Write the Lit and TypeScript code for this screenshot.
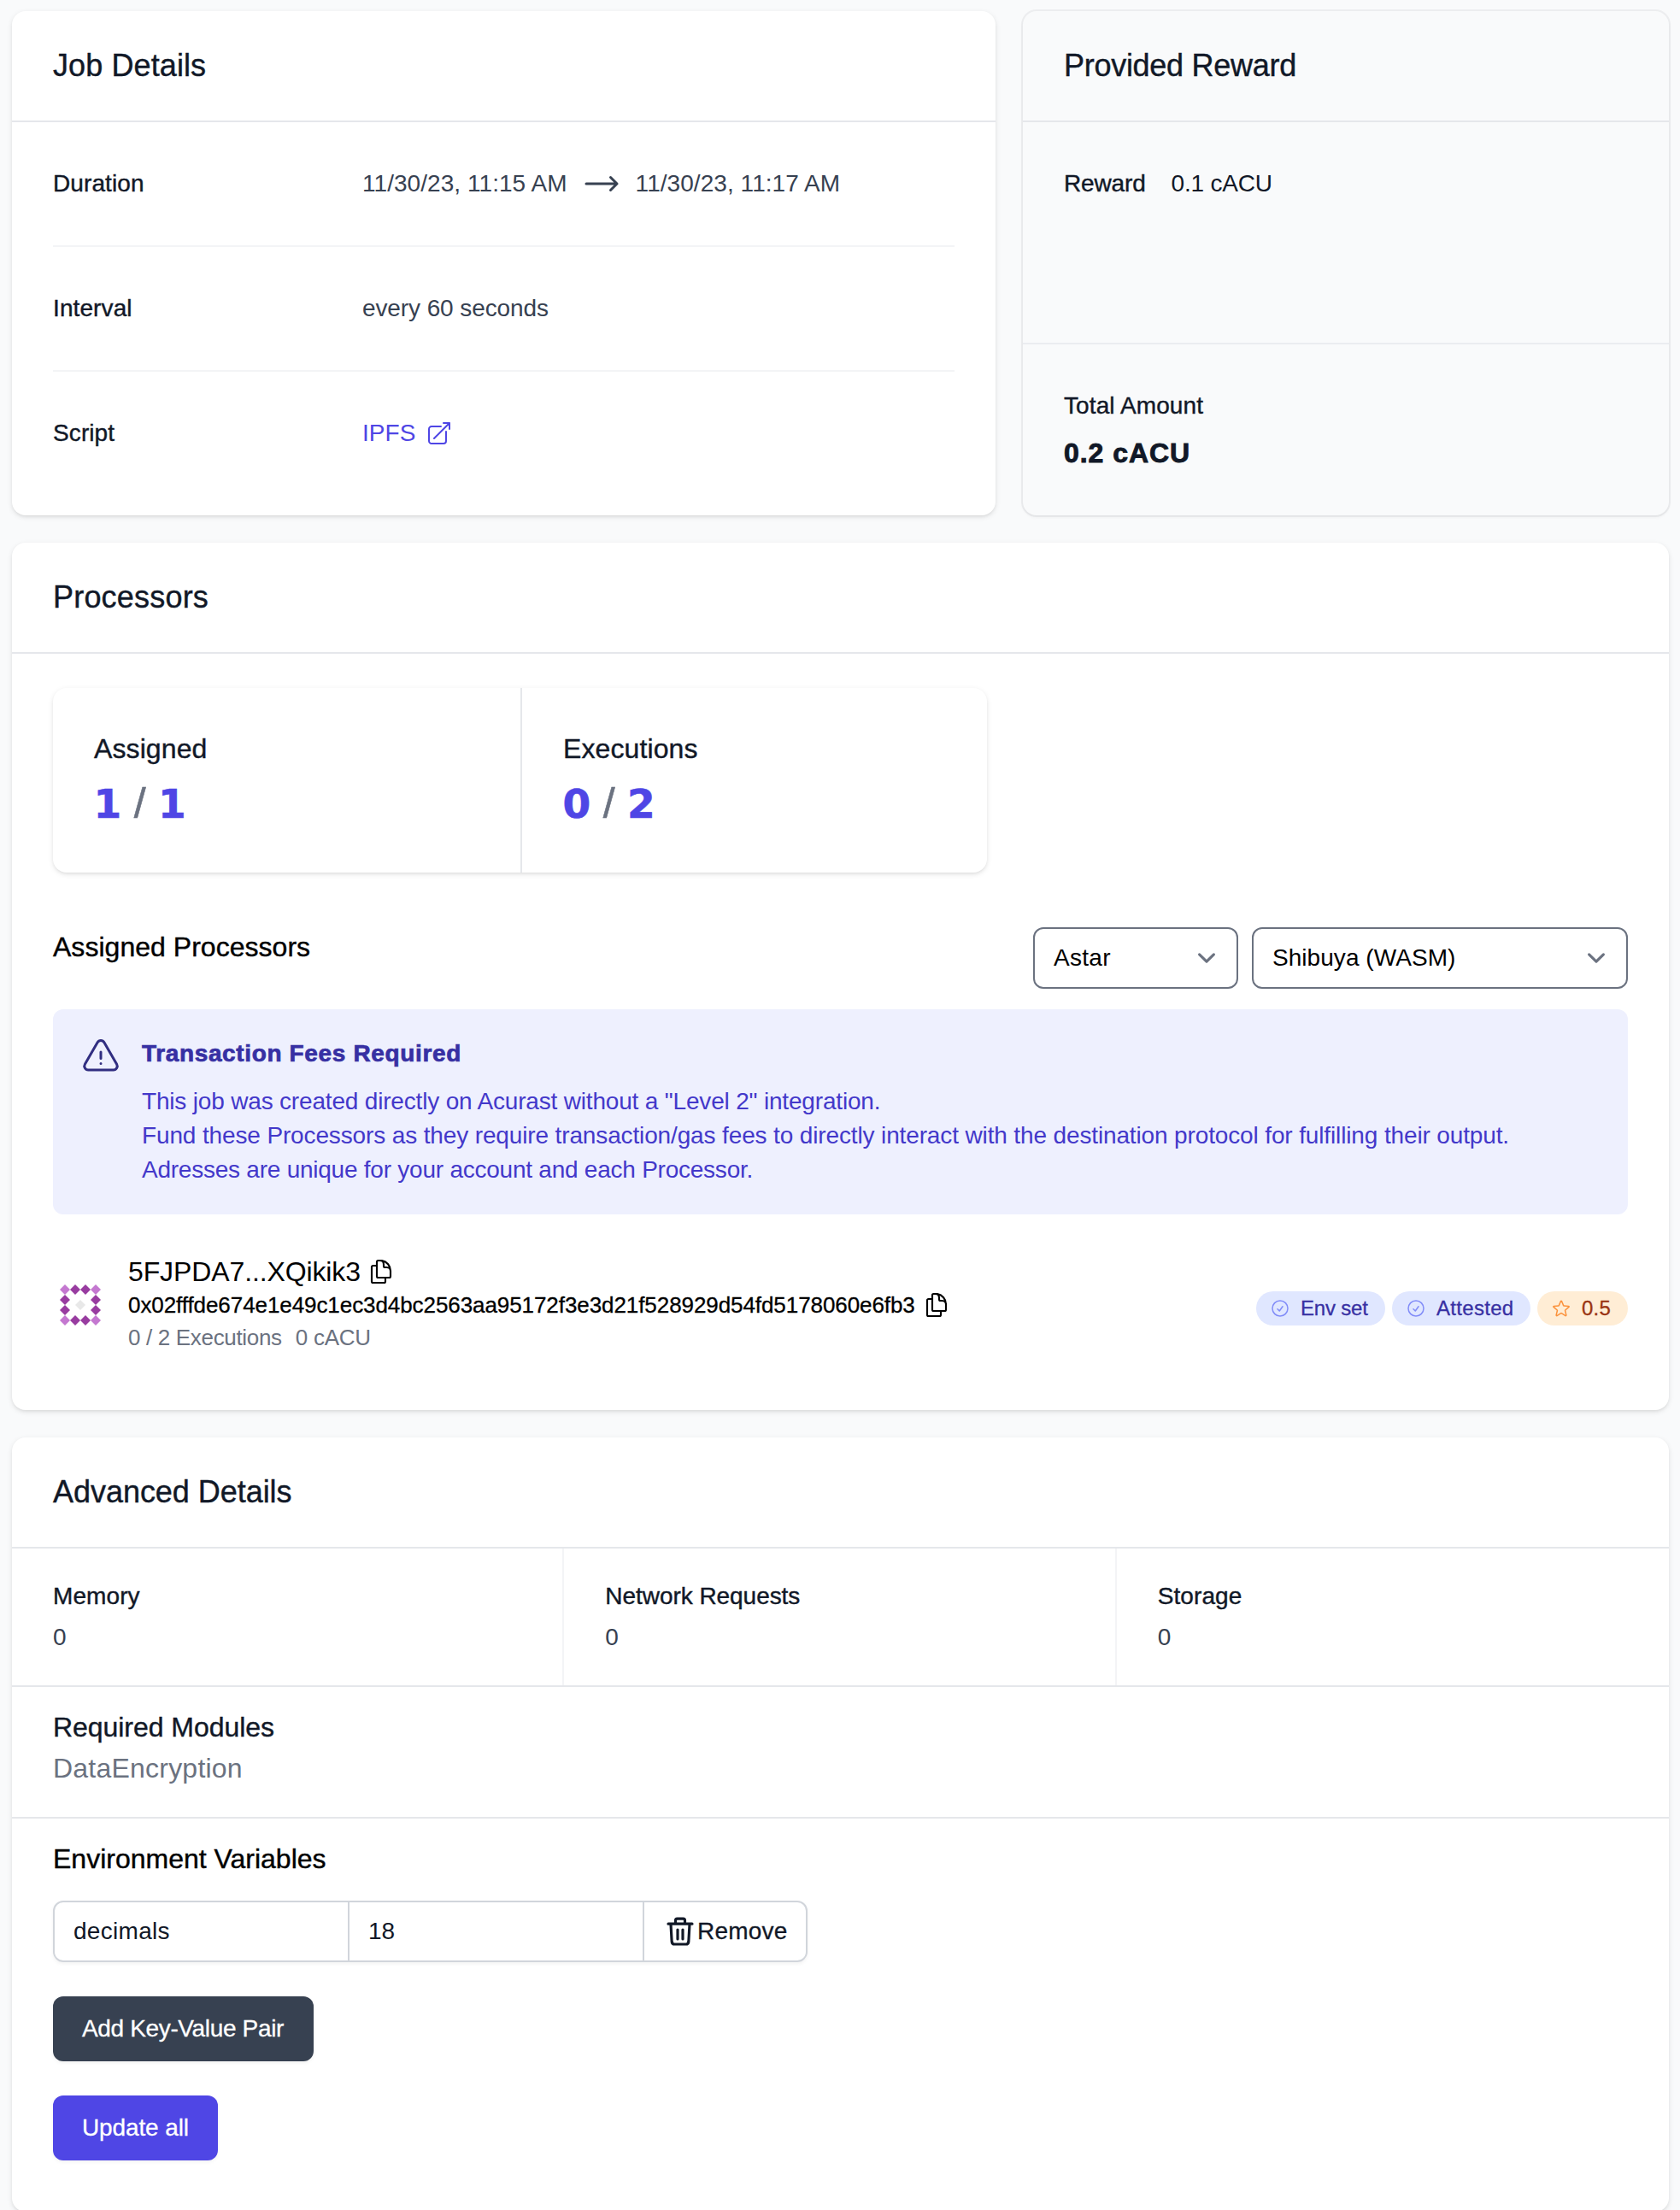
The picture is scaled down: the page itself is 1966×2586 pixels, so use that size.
import { LitElement, html, css, svg } from "lit";

const icons = {
  arrow: svg`<path d="M17.25 8.25L21 12m0 0l-3.75 3.75M21 12H3"/>`,
  external: svg`<path d="M13.5 6H5.25A2.25 2.25 0 003 8.25v10.5A2.25 2.25 0 005.25 21h10.5A2.25 2.25 0 0018 18.75V10.5m-10.5 6L21 3m0 0h-5.25M21 3v5.25"/>`,
  warning: svg`<path d="M12 9v3.75m-9.303 3.376c-.866 1.5.217 3.374 1.948 3.374h14.71c1.73 0 2.813-1.874 1.948-3.374L13.949 3.378c-.866-1.5-3.032-1.5-3.898 0L2.697 16.126zM12 15.75h.007v.008H12v-.008z"/>`,
  copy: svg`<path d="M15.75 17.25v3.375c0 .621-.504 1.125-1.125 1.125h-9.75a1.125 1.125 0 01-1.125-1.125V7.875c0-.621.504-1.125 1.125-1.125H6.75a9.06 9.06 0 011.5.124m7.5 10.376h3.375c.621 0 1.125-.504 1.125-1.125V11.25c0-4.46-3.243-8.161-7.5-8.876a9.06 9.06 0 00-1.5-.124H9.375c-.621 0-1.125.504-1.125 1.125v3.5m7.5 10.375H9.375a1.125 1.125 0 01-1.125-1.125v-9.25m12 6.625v-1.875a3.375 3.375 0 00-3.375-3.375h-1.5a1.125 1.125 0 01-1.125-1.125v-1.5a3.375 3.375 0 00-3.375-3.375H9.75"/>`,
  check: svg`<path d="M9 12.75L11.25 15 15 9.75M21 12a9 9 0 11-18 0 9 9 0 0118 0z"/>`,
  star: svg`<path d="M11.48 3.499a.562.562 0 011.04 0l2.125 5.111a.563.563 0 00.475.345l5.518.442c.499.04.701.663.321.988l-4.204 3.602a.563.563 0 00-.182.557l1.285 5.385a.562.562 0 01-.84.61l-4.725-2.885a.563.563 0 00-.586 0L6.982 20.54a.562.562 0 01-.84-.61l1.285-5.386a.562.562 0 00-.182-.557l-4.204-3.602a.563.563 0 01.321-.988l5.518-.442a.563.563 0 00.475-.345L11.48 3.5z"/>`,
  trash: svg`<path d="M3.6 6.7h16.8M8.7 6.5V4.3c0-.7.5-1.2 1.2-1.2h4.2c.7 0 1.2.5 1.2 1.2v2.2M5.4 6.9l.7 12.3c.1 1 .9 1.8 1.9 1.8h8c1 0 1.8-.8 1.9-1.8l.7-12.3M10.2 10.8v6.6M13.8 10.8v6.6"/>`,
};

const icon = (name: keyof typeof icons, cls = "") => html`
  <svg class="icon ${cls}" viewBox="0 0 24 24" fill="none" stroke="currentColor"
    stroke-width="1.5" stroke-linecap="round" stroke-linejoin="round">${icons[name]}</svg>`;

const select = (label: string, cls: string) => html`
  <div class="select ${cls}">
    <span>${label}</span>
    <svg class="chevron" viewBox="0 0 20 20" fill="none" stroke="#6b7280" stroke-width="1.5"
      stroke-linecap="round" stroke-linejoin="round"><path d="M6 8l4 4 4-4"/></svg>
  </div>`;

// Identicon: ring of twelve diamonds with a pale one in the middle.
const diamond = (x: number, y: number, fill: string) =>
  svg`<path d="M${x} ${y - 6}L${x + 6} ${y}L${x} ${y + 6}L${x - 6} ${y}Z" fill=${fill}/>`;
const ring: [number, number][] = [];
for (let r = 0; r < 4; r++)
  for (let c = 0; c < 4; c++)
    if (r % 3 === 0 || c % 3 === 0) ring.push([c, r]);

class AppRoot extends LitElement {
  static styles = css`
    :host {
      display: block; box-sizing: border-box; height: 2586px; overflow: hidden;
      padding: 13px 13px 0 14px; background: #f9fafb; color: #111827;
      font-family: "Liberation Sans", Arial, sans-serif; font-size: 28px; line-height: 48px;
    }
    * { box-sizing: border-box; }
    .page { display: flex; flex-direction: column; gap: 32px; }
    .top { display: grid; grid-template-columns: 1151px 1fr; gap: 32px; height: 590px; }
    .card {
      background: #fff; border-radius: 16px;
      box-shadow: 0 2px 6px rgba(0,0,0,.1), 0 2px 4px -2px rgba(0,0,0,.1);
    }
    .muted {
      background: #f9fafb; display: flex; flex-direction: column;
      box-shadow: 0 0 0 2px rgba(17,24,39,.05), 0 2px 4px rgba(0,0,0,.05);
    }
    .head {
      height: 130px; padding: 40px 48px; border-bottom: 2px solid #e5e7eb;
      font-size: 36px; letter-spacing: .1px; -webkit-text-stroke: .4px;
    }
    .muted .head { letter-spacing: -.28px; }
    .advanced .head { letter-spacing: -.04px; }
    .processors .head { letter-spacing: .2px; }
    .label { -webkit-text-stroke: .4px; letter-spacing: .1px; }
    .icon { display: block; flex: none; width: 32px; height: 32px; }
    .rows { padding: 0 48px; }
    .row { display: flex; align-items: center; height: 146px; border-bottom: 2px solid #f3f4f6; color: #374151; letter-spacing: .05px; }
    .row:last-child { border: 0; height: 144px; }
    .row .label { width: 362px; color: #111827; }
    .row .every { letter-spacing: -.1px; }
    .arrow { width: 48px; height: 48px; margin: 0 16px; }
    .link { display: flex; align-items: center; gap: 12px; color: #4f46e5; }
    .reward { display: flex; gap: 30px; padding: 48px; height: 260px; border-bottom: 2px solid #ebedf0; }
    .reward .label { letter-spacing: -.15px; }
    .reward .label + span { letter-spacing: -.2px; }
    .total { padding: 48px; }
    .amount { font-size: 32px; font-weight: 700; letter-spacing: .95px; padding-top: 7px; -webkit-text-stroke: .9px; }

    .processors { height: 1015px; }
    .body { padding: 40px 48px 0; }
    .stats { display: flex; width: 1093px; height: 216px; border-radius: 16px;
      box-shadow: 0 2px 6px rgba(0,0,0,.1), 0 2px 4px -2px rgba(0,0,0,.1); }
    .stat { flex: 1; padding: 47px 48px 0; font-size: 32px; }
    .stat + .stat { flex: none; width: 546px; border-left: 2px solid #e5e7eb; padding-left: 48px; }
    .nums { display: flex; align-items: baseline; gap: 14.5px; margin: 8px 0 0 -.5px; height: 64px;
      font: 700 47px/64px "DejaVu Sans", sans-serif; color: #4f46e5; -webkit-text-stroke: .6px; }
    .slash { font: 400 50px/64px "Liberation Sans", sans-serif; color: #6b7280; }
    .bar { display: flex; align-items: flex-start; margin-top: 64px; gap: 16px; color: #000; }
    .h2 { font-size: 32px; letter-spacing: .03px; -webkit-text-stroke: .4px; }
    .bar .h2 { flex: 1; margin-top: -1px; }
    .select { display: flex; align-items: center; justify-content: space-between; height: 72px;
      border: 2px solid #6b7280; border-radius: 12px; background: #fff; padding: 0 14px 0 22px; letter-spacing: .05px; }
    .w1 { width: 240px; letter-spacing: .3px; } .w2 { width: 440px; }
    .chevron { width: 42px; height: 42px; }
    .alert { display: flex; gap: 24px; margin-top: 24px; height: 240px; padding: 32px; border-radius: 12px;
      background: #eef0fe; color: #4338ca; line-height: 40px; }
    .alert .icon { width: 48px; height: 48px; color: #312e81; }
    .alert-title { font-weight: 700; color: #3730a3; letter-spacing: .64px; margin-bottom: 16px; -webkit-text-stroke: .7px; }
    .l1 { letter-spacing: -.18px; } .l2 { letter-spacing: -.135px; } .l3 { letter-spacing: -.239px; }
    .proc { display: flex; margin-top: 47px; color: #000; }
    .avatar { flex: none; width: 64px; height: 64px; margin: 27px 24px 0 0; }
    .who { flex: 1; line-height: 38px; }
    .name { display: flex; align-items: center; gap: 8px; height: 40px; font-size: 32px; letter-spacing: -.116px; }
    .hash { display: flex; align-items: center; gap: 9px; height: 38px; font-size: 26px; letter-spacing: -.075px; -webkit-text-stroke: .3px; }
    .hash .icon, .name .icon { stroke-width: 1.6; }
    .exec { display: flex; gap: 16px; font-size: 26px; color: #6b7280; }
    .exec .a { letter-spacing: -.33px; } .exec .b { letter-spacing: -.25px; }
    .badges { display: flex; gap: 8px; margin-top: 43px; height: 40px; }
    .badge { display: flex; align-items: center; gap: 12px; padding: 0 16px; border-radius: 20px; font-size: 24px;
      line-height: 40px; background: #e0e7ff; color: #3730a3; -webkit-text-stroke: .3px; }
    .badge .icon { width: 24px; height: 24px; color: #818cf8; }
    .env { width: 151px; letter-spacing: -.2px; } .att { width: 162px; letter-spacing: .3px; }
    .score { width: 106px; background: #ffedd5; color: #9a3412; letter-spacing: .2px; }
    .score .icon { color: #fb923c; }

    .advanced { height: 906px; }
    .metrics { display: grid; grid-template-columns: repeat(3, 1fr); height: 162px; border-bottom: 2px solid #e5e7eb; }
    .metric { padding: 32px 46px 0 48px; color: #374151; border-right: 2px solid #f3f4f6; }
    .metric:last-child { border: 0; }
    .metric .label { color: #111827; }
    .metric:nth-child(2) .label { letter-spacing: -.05px; }
    .modules { height: 154px; padding: 23px 48px 0; font-size: 32px; border-bottom: 2px solid #e5e7eb; }
    .modules .value { color: #6b7280; letter-spacing: .22px; }
    .modules .h2 { letter-spacing: -.05px; }
    .vars { padding: 23px 48px 0; }
    .vars .h2 { color: #000; letter-spacing: 0; }
    .fields { display: flex; width: 883px; height: 72px; margin-top: 25px; border: 2px solid #d1d5db; border-radius: 12px;
      box-shadow: 0 2px 4px rgba(0,0,0,.05); line-height: 68px; }
    .field { padding-left: 22px; border-right: 2px solid #d1d5db; letter-spacing: .3px; }
    .field.k { width: 345px; } .field.v { width: 345px; letter-spacing: 0; }
    .remove { display: flex; align-items: center; padding-left: 22px; letter-spacing: .2px; -webkit-text-stroke: .3px; }
    .remove .icon { width: 40px; height: 40px; stroke-width: 1.9; }
    .btn { width: max-content; height: 76px; line-height: 76px; margin-top: 40px; border-radius: 12px; padding: 0 34px; color: #fff;
      box-shadow: 0 2px 4px rgba(0,0,0,.05); -webkit-text-stroke: .3px; }
    .add { background: #374151; width: 305px; letter-spacing: -.35px; white-space: nowrap; }
    .update { background: #4f46e5; width: 193px; letter-spacing: -.12px; white-space: nowrap; }
  `;

  render() {
    return html`<div class="page">
      <div class="top">
        <section class="card">
          <div class="head">Job Details</div>
          <div class="rows">
            <div class="row"><span class="label">Duration</span><span>11/30/23, 11:15 AM</span>${icon("arrow", "arrow")}<span>11/30/23, 11:17 AM</span></div>
            <div class="row"><span class="label">Interval</span><span class="every">every 60 seconds</span></div>
            <div class="row"><span class="label">Script</span><span class="link">IPFS ${icon("external")}</span></div>
          </div>
        </section>
        <section class="card muted">
          <div class="head">Provided Reward</div>
          <div class="reward"><span class="label">Reward</span><span>0.1 cACU</span></div>
          <div class="total"><div class="label">Total Amount</div><div class="amount">0.2 cACU</div></div>
        </section>
      </div>

      <section class="card processors">
        <div class="head">Processors</div>
        <div class="body">
          <div class="stats">
            <div class="stat"><div class="label">Assigned</div>
              <div class="nums"><span>1</span><span class="slash">/</span><span>1</span></div></div>
            <div class="stat"><div class="label">Executions</div>
              <div class="nums"><span>0</span><span class="slash">/</span><span>2</span></div></div>
          </div>
          <div class="bar"><div class="h2">Assigned Processors</div>${select("Astar", "w1")}${select("Shibuya (WASM)", "w2")}</div>
          <div class="alert">
            ${icon("warning")}
            <div>
              <div class="alert-title">Transaction Fees Required</div>
              <div class="l1">This job was created directly on Acurast without a "Level 2" integration.</div>
              <div class="l2">Fund these Processors as they require transaction/gas fees to directly interact with the destination protocol for fulfilling their output.</div>
              <div class="l3">Adresses are unique for your account and each Processor.</div>
            </div>
          </div>
          <div class="proc">
            <svg class="avatar" viewBox="0 0 64 64">
              ${ring.map(([c, r]) => diamond(14 + c * 12, 14 + r * 12, r % 3 === 0 && c % 3 === 0 ? "#c478d0" : "#983ca0"))}
              ${diamond(32, 32, "#e8e8e8")}
            </svg>
            <div class="who">
              <div class="name">5FJPDA7...XQikik3 ${icon("copy")}</div>
              <div class="hash">0x02fffde674e1e49c1ec3d4bc2563aa95172f3e3d21f528929d54fd5178060e6fb3 ${icon("copy")}</div>
              <div class="exec"><span class="a">0 / 2 Executions</span><span class="b">0 cACU</span></div>
            </div>
            <div class="badges">
              <div class="badge env">${icon("check")}Env set</div>
              <div class="badge att">${icon("check")}Attested</div>
              <div class="badge score">${icon("star")}0.5</div>
            </div>
          </div>
        </div>
      </section>

      <section class="card advanced">
        <div class="head">Advanced Details</div>
        <div class="metrics">
          ${["Memory", "Network Requests", "Storage"].map(
            (m) => html`<div class="metric"><div class="label">${m}</div><div>0</div></div>`)}
        </div>
        <div class="modules"><div class="h2">Required Modules</div><div class="value">DataEncryption</div></div>
        <div class="vars">
          <div class="h2">Environment Variables</div>
          <div class="fields">
            <div class="field k">decimals</div><div class="field v">18</div>
            <div class="remove">${icon("trash")}Remove</div>
          </div>
          <div class="btn add">Add Key-Value Pair</div>
          <div class="btn update">Update all</div>
        </div>
      </section>
    </div>`;
  }
}
customElements.define("app-root", AppRoot);
